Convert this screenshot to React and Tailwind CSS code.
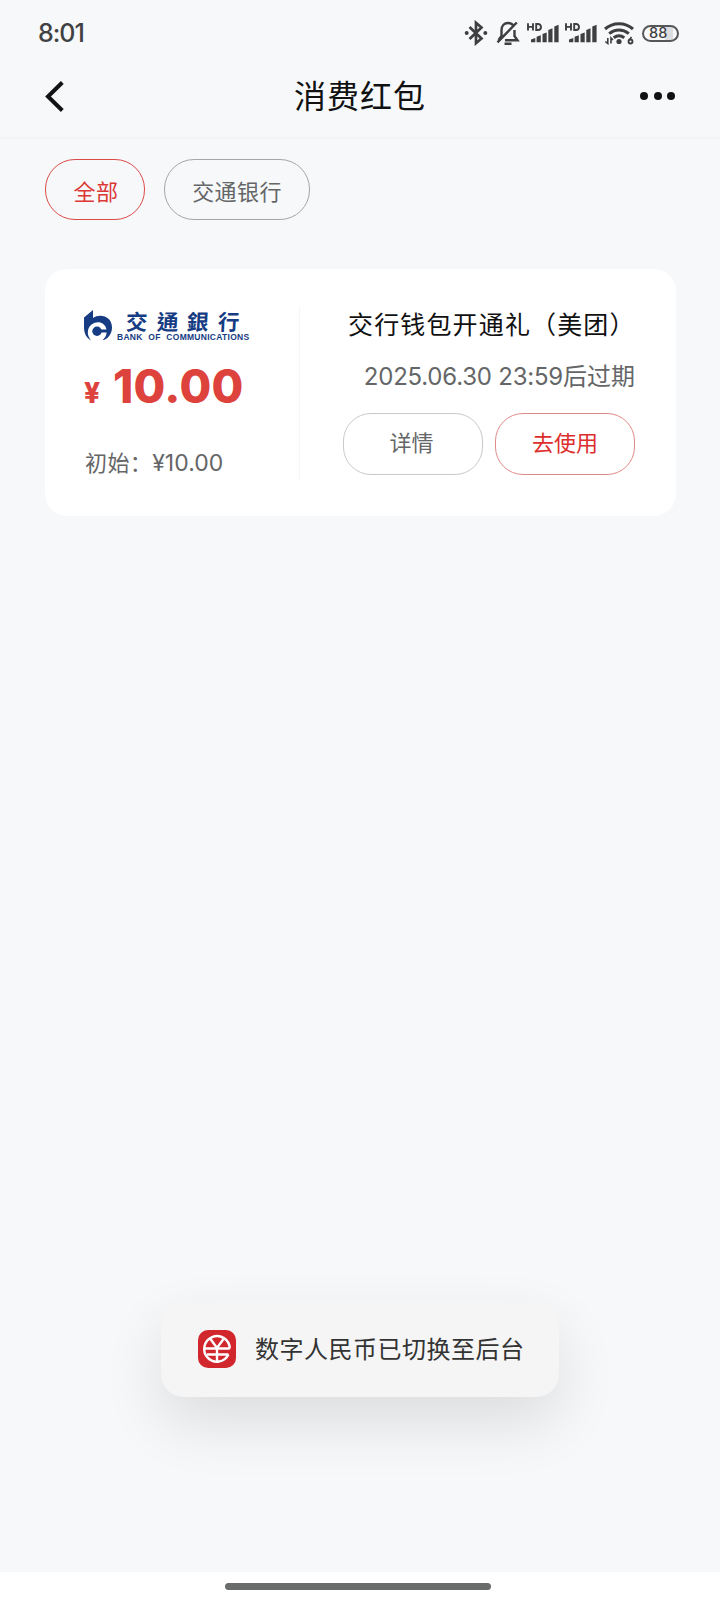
const F = "font-['Inter','Noto_Sans_CJK_SC',sans-serif]";

function Signal() {
  return (
    <svg className="h-5 w-8" viewBox="0 0 32 20" fill="#3d3f40">
      <path d="M4 16.500l4.300-1.500v4.300H4zM9.600 13.800l4.200-1.600v7.100H9.600zM15.500 11l4.200-1.600v9.900h-4.200zM21.300 7l4.200-1.800v14.100h-4.200zM27.300 3.400l4.300-1.600v17.500h-4.300z" />
      <path d="M1 .2v7.400M6 .2v7.400M1 3.900h5M9.200 1v6h1.800c4 0 4-6 0-6z" fill="none" stroke="#3d3f40" strokeWidth="1.900" />
    </svg>
  );
}

function StatusBar() {
  return (
    <div className="flex h-[66px] items-center justify-between pr-[41px] pl-[38px]">
      <div className="text-[25px] leading-none font-medium tracking-[-1px] text-[#3f4142]">8:01</div>
      <div className="flex items-center">
        <svg className="h-[26px] w-[24px]" viewBox="0 0 24 26" fill="none" stroke="#3d3f40" strokeWidth="2.700">
          <path d="M5.500 7L17.500 18.500l-5.500 4.700V2.800l5.500 4.700L5.500 19" />
          <circle cx="2.700" cy="13" r="2" fill="#3d3f40" stroke="none" />
          <circle cx="21.300" cy="13" r="2" fill="#3d3f40" stroke="none" />
        </svg>
        <svg className="ml-2 h-[26px] w-[24px]" viewBox="0 0 24 26" fill="none" stroke="#3d3f40" strokeWidth="2.400">
          <path d="M2.500 20l3-4v-5.500c0-5 3-7.500 6.500-7.500 2.500 0 4.500 1 5.500 3M18.500 10v6l3 4.300H9M1.500 22.300L20.800 2.500M8.500 23.800h7" />
        </svg>
        <div className="ml-[7px] flex gap-[6px]"><Signal /><Signal /></div>
        <svg className="ml-[7px] h-[24px] w-[30px]" viewBox="0 0 30 24" fill="none" stroke="#3d3f40" strokeWidth="3">
          <path d="M1 8c8-7 20-7 28 0M5.200 12.700c6-5 13.600-5 19.600 0M9.700 16.800c3.300-2.500 7.300-2.500 10.600 0" />
          <circle cx="15" cy="20.500" r="2.600" fill="#3d3f40" stroke="none" />
          <path d="M3.800 17v5.500l-2.500-2M7 22.500V17l2 2M27.500 16l-2.500 3.500" strokeWidth="1.600" />
          <circle cx="26.500" cy="20.500" r="2" strokeWidth="1.800" />
        </svg>
        <div className="ml-2 flex h-[17px] w-[37px] items-center rounded-full border-2 border-[#55585a] bg-[linear-gradient(90deg,#f7f8fa_0%,#f7f8fa_65%,#dcddde_65%,#dcddde_88%,#f7f8fa_88%)] pl-[5px] text-[14.500px] leading-none font-medium text-[#3d3f40]">88</div>
      </div>
    </div>
  );
}

function BankLogo() {
  return (
    <div className="flex h-[31px] w-[170px] text-[#163c83]">
      <svg className="h-[31px] w-[28px] shrink-0" viewBox="0 0 28 31" fill="#163c83">
        <path d="M0 7.500L9 0v8C16 3 28 6 28 17.500 28 24 24 29 18.500 30.300 22 27 23 24 22.500 20 21 9.500 6.500 10 4 20.500 3.300 24 4.500 27 7 30.500 2 27.500 0 23 0 17z" />
        <circle cx="13" cy="21.200" r="4.700" />
        <path d="M13 19.500h10v3H13z" />
      </svg>
      <div className="ml-[5px] flex flex-col">
        <div className="flex h-[22px] items-center gap-[9px] pl-[9px] font-['Noto_Sans_CJK_TC',sans-serif] text-[21.500px] leading-none font-bold">
          <span className="-skew-x-3">交</span><span className="-skew-x-3">通</span><span className="-skew-x-3">銀</span><span className="-skew-x-3">行</span>
        </div>
        <div className="mt-[1px] font-['Liberation_Sans',sans-serif] text-[8.500px] leading-[9px] font-bold tracking-[0.280px] whitespace-nowrap [word-spacing:3px]">BANK OF COMMUNICATIONS</div>
      </div>
    </div>
  );
}

export default function App() {
  return (
    <div className={"relative flex h-[1600px] w-[720px] flex-col overflow-hidden bg-[#f6f8fa] " + F}>
      <StatusBar />
      <header className="grid h-[73px] grid-cols-[1fr_auto_1fr] items-center border-b-2 border-[#f3f4f6] pr-[45px] pb-[11px] pl-[45px]">
        <svg className="h-[31px] w-[19px]" viewBox="0 0 19 31" fill="none" stroke="#111314" strokeWidth="4">
          <path d="M17.300 1.500L3 15.500l14.300 14" />
        </svg>
        <h1 className="pt-px text-[32px] leading-none font-normal tracking-[1px] text-[#111]">消费红包</h1>
        <div className="flex gap-[5.500px] justify-self-end">
          <i className="size-2 rounded-full bg-[#111]" /><i className="size-2 rounded-full bg-[#111]" /><i className="size-2 rounded-full bg-[#111]" />
        </div>
      </header>

      <nav className="mt-[20px] ml-[45px] flex gap-[19px]">
        <button className="h-[61px] w-[100px] rounded-[30px] border border-[#dc4a48] pt-[5px] pl-[2px] text-[22px] leading-none tracking-[0.400px] text-[#dc3936]">全部</button>
        <button className="h-[61px] w-[146px] rounded-[30px] border border-[#a5a6a8] pt-[5px] text-[22px] leading-none tracking-[0.400px] text-[#656667]">交通银行</button>
      </nav>

      <section className="mt-[49px] ml-[45px] flex h-[247px] w-[631px] rounded-[22px] bg-white">
        <div className="mt-[38px] flex h-[173px] w-[255px] flex-col border-r border-[#f5f6f7] pl-[39px]">
          <div className="mt-[3px]"><BankLogo /></div>
          <div className="mt-[22px] flex items-baseline font-extrabold text-[#dd423c]">
            <span className="w-[29px] text-[28px] leading-[46px]">¥</span>
            <span className="text-[46px] leading-[46px] tracking-[0.300px]">10.00</span>
          </div>
          <div className="mt-[31px] pl-[1px] text-[22px] leading-[32px] whitespace-nowrap text-[#656667]"><span className="tracking-[0.400px]">初始：</span><span className="text-[23px]">¥10.00</span></div>
        </div>
        <div className="flex w-[335px] flex-col items-end pt-[41px]">
          <div className="w-[287px] text-[25px] leading-[30px] tracking-[1.150px] whitespace-nowrap text-[#111]">交行钱包开通礼（美团）</div>
          <div className="mt-[22px] text-[24px] leading-[30px] whitespace-nowrap text-[#656667]"><span className="tracking-[-0.220px]">2025.06.30 23:59</span>后过期</div>
          <div className="mt-[21px] flex gap-[12px]">
            <button className="h-[62px] w-[140px] rounded-[28px] border border-[#c9c9ca] pr-[3px] pb-[2px] text-[22px] leading-none text-[#656667]">详情</button>
            <button className="h-[62px] w-[140px] rounded-[28px] border border-[#e08a88] pb-[2px] text-[22px] leading-none text-[#dc2f2d]">去使用</button>
          </div>
        </div>
      </section>

      <div className="absolute top-[1301px] left-[161px] flex h-[96px] w-[398px] items-center rounded-[23px] bg-[#f5f5f5] pl-[37px] shadow-[0_26px_60px_rgba(0,0,0,0.11)]">
        <svg className="size-[38px] shrink-0" viewBox="0 0 38 38" fill="none" stroke="#fff" strokeWidth="2.400">
          <rect width="38" height="38" rx="10" fill="#d0262c" stroke="none" />
          <path d="M31.800 18.500A12.800 12.800 0 1 0 30.500 24.500" />
          <path d="M12.500 9l6.500 9 6.500-9M19 18v14M6.500 18.500h25.300M9 24.500h21.500" />
        </svg>
        <span className="mt-[2px] ml-[19px] text-[24px] leading-none tracking-[0.500px] whitespace-nowrap text-[#333]">数字人民币已切换至后台</span>
      </div>

      <footer className="mt-auto flex h-[28px] items-center justify-center bg-white pr-[4px]">
        <div className="h-[7px] w-[266px] rounded-full bg-[#6a6b6b]" />
      </footer>
    </div>
  );
}
